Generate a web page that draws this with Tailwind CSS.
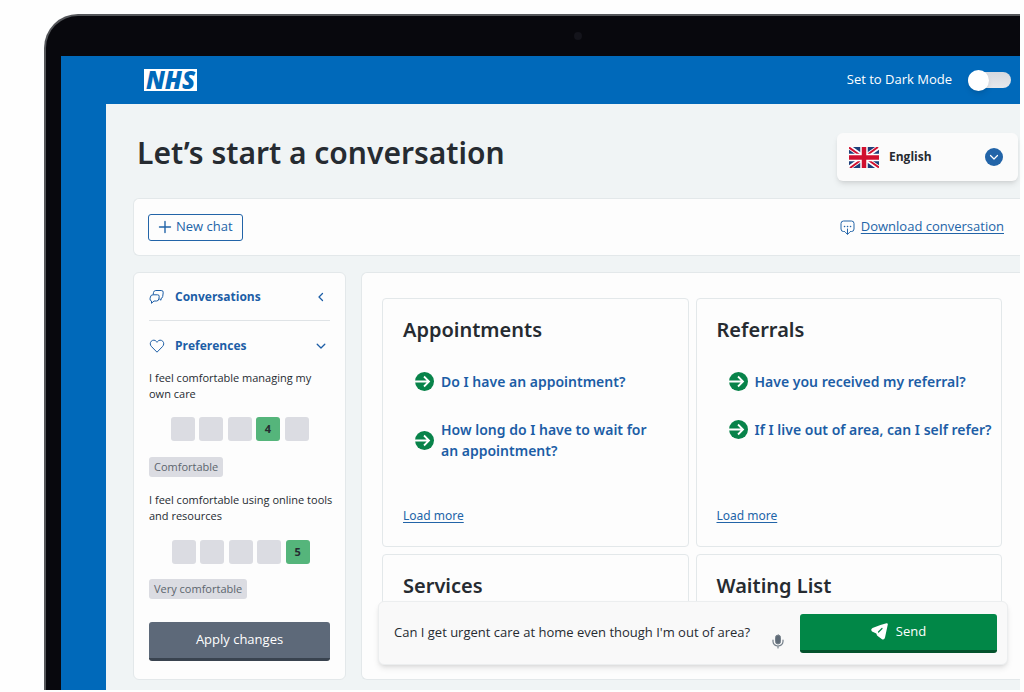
<!DOCTYPE html>
<html lang="en">
  <head>
    <meta charset="UTF-8" />
    <meta name="viewport" content="width=device-width, initial-scale=1.0" />
    <title>Let's start a conversation - NHS</title>
    <script src="https://cdn.jsdelivr.net/npm/@tailwindcss/browser@4"></script>
  </head>
  <body class="bg-[#fefefe] font-['Open_Sans','Noto_Sans',sans-serif] text-[#262b31]">
    <!-- Laptop frame -->
    <div class="mt-[14px] mr-1 ml-11 rounded-tl-[34px] border-t-2 border-l-2 border-[#54565a] bg-[#08080d] pl-[15px]">
      <div class="flex h-10 items-center justify-center pl-[74px]">
        <span class="size-2 rounded-full bg-[#14141b]"></span>
      </div>

      <!-- Screen -->
      <div class="bg-[#0069ba]">
        <header class="flex h-12 items-center justify-between pr-[9px] pl-[83px]">
          <a href="#" class="flex h-[22px] w-[53px] items-center justify-center bg-white text-2xl leading-none font-extrabold text-[#0069ba] italic">NHS</a>
          <label class="flex items-center gap-4 text-[13px] text-white">
            Set to Dark Mode
            <input
              type="checkbox"
              role="switch"
              class="flex h-4 w-[43px] appearance-none items-center rounded-full bg-linear-to-b from-[#d5d8df] to-[#e6e8ec] before:size-[21px] before:shrink-0 before:rounded-full before:bg-white before:shadow-md"
            />
          </label>
        </header>

        <main class="ml-[45px] bg-[#f0f4f5] pb-[10px] pl-[27px]">
          <div class="flex h-[94px] items-center justify-between pl-1">
            <h1 class="pt-1 font-['Noto_Sans',sans-serif] text-3xl leading-10 font-semibold">Let’s start a conversation</h1>
            <div class="mt-3 mr-[2px] flex h-12 w-[181px] items-center rounded-md bg-[#fbfbfb] px-3 shadow-md">
              <svg class="h-[21px] w-[30px] shrink-0" viewBox="0 0 60 42" aria-hidden="true">
                <path fill="#1d3f7a" d="M0 0h60v42H0z" />
                <path stroke="#fff" stroke-width="9" d="m0 0 60 42M60 0 0 42" />
                <path stroke="#d0102f" stroke-width="4" d="m0 1 27 19M60 41 33 22M58 0 32 19M2 42l26-19" />
                <path stroke="#fff" stroke-width="15" d="M30 0v42M0 21h60" />
                <path stroke="#d0102f" stroke-width="9" d="M30 0v42M0 21h60" />
              </svg>
              <select aria-label="Language" class="min-w-0 flex-1 appearance-none bg-transparent pl-[10px] text-xs font-bold">
                <option>English</option>
              </select>
              <svg class="mr-[3px] size-[18px] shrink-0" viewBox="0 0 18 18" fill="none" aria-hidden="true">
                <circle cx="9" cy="9" r="9" fill="#2264a8" />
                <path d="m5.5 7.5 3.5 3.5 3.5-3.5" stroke="#fff" stroke-width="1.2" stroke-linecap="round" stroke-linejoin="round" />
              </svg>
            </div>
          </div>

          <div class="flex h-[58px] items-center justify-between rounded-l-md border border-r-0 border-[#e3e8ea] bg-[#fdfdfd] pr-4 pl-[14px]">
            <button class="flex h-[27px] items-center gap-1 rounded-[3px] border border-[#2264a8] px-[9px] text-[13px] text-[#2264a8]">
              <svg class="size-[14px]" viewBox="0 0 14 14" fill="none" stroke="currentColor" stroke-width="1.4" stroke-linecap="round" aria-hidden="true">
                <path d="M7 1.5v11M1.5 7h11" />
              </svg>
              New chat
            </button>
            <a href="#" class="flex items-center gap-[6px] text-[13px] text-[#2264a8]">
              <svg class="size-[15px]" viewBox="0 0 15 15" fill="none" stroke="currentColor" stroke-linecap="round" stroke-linejoin="round" aria-hidden="true">
                <path d="M4.5 11.5h-1A2.5 2.5 0 0 1 1 9V3.5A2.5 2.5 0 0 1 3.5 1h8A2.5 2.5 0 0 1 14 3.5V9a2.5 2.5 0 0 1-2.5 2.5h-1" />
                <path d="M7.5 9v5M5.5 12.5l2 1.8 2-1.8" />
                <path d="M4.5 6.5h.1M7.5 6.5h.1M10.5 6.5h.1" stroke-width="1.5" />
              </svg>
              <span class="underline underline-offset-2">Download conversation</span>
            </a>
          </div>

          <div class="mt-4 flex gap-[15px]">
            <!-- Sidebar -->
            <aside class="w-[213px] shrink-0 rounded-md border border-[#e3e8ea] bg-[#fdfdfd] px-[15px] pb-[18px]">
              <button class="flex h-12 w-full items-center border-b border-[#dfe3e6] text-xs font-bold text-[#1c5da6]">
                <svg class="mr-[10px] size-4" viewBox="0 0 16 16" fill="none" stroke="currentColor" stroke-linejoin="round" aria-hidden="true">
                  <path d="M4.2 5.5 4.5 3.5A2.4 2.4 0 0 1 6.8 1.5h5.4a2 2 0 0 1 2 2.3l-.5 3.7a2.4 2.4 0 0 1-1.7 2v1.7l-1.8-1.4" />
                  <path d="M4 5.8h4.5a1.7 1.7 0 0 1 1.7 2l-.4 2A2.3 2.3 0 0 1 7.6 12H5l-2.5 2.3V12A2 2 0 0 1 1 9.8l.4-1.8A2.6 2.6 0 0 1 4 5.8Z" />
                </svg>
                Conversations
                <svg class="mr-1 ml-auto size-[10px]" viewBox="0 0 10 10" fill="none" stroke="currentColor" stroke-width="1.3" stroke-linecap="round" stroke-linejoin="round" aria-hidden="true">
                  <path d="M6.5 1.5 3 5l3.5 3.5" />
                </svg>
              </button>
              <button class="flex h-[49px] w-full items-center text-xs font-bold text-[#1c5da6]">
                <svg class="mr-[10px] size-4" viewBox="0 0 16 16" fill="none" stroke="currentColor" stroke-linejoin="round" aria-hidden="true">
                  <path d="M8 14.2 2.6 8.7C.9 7 .9 4.7 2.2 3.3c1.5-1.6 4-1.5 5.2.2L8 4.3l.6-.8c1.2-1.7 3.7-1.8 5.2-.2 1.3 1.4 1.3 3.7-.4 5.4Z" />
                </svg>
                Preferences
                <svg class="mr-1 ml-auto size-[10px]" viewBox="0 0 10 10" fill="none" stroke="currentColor" stroke-width="1.3" stroke-linecap="round" stroke-linejoin="round" aria-hidden="true">
                  <path d="M1.2 3.2 5 7l3.8-3.8" />
                </svg>
              </button>

              <fieldset>
                <legend class="text-[11px] leading-4 whitespace-nowrap">I feel comfortable managing my<br />own care</legend>
                <div class="mx-auto mt-[15px] flex w-[138px] justify-between">
                  <input type="radio" name="care" aria-label="1" class="size-6 appearance-none rounded-[3px] bg-[#dbdce2]" />
                  <input type="radio" name="care" aria-label="2" class="size-6 appearance-none rounded-[3px] bg-[#dbdce2]" />
                  <input type="radio" name="care" aria-label="3" class="size-6 appearance-none rounded-[3px] bg-[#dbdce2]" />
                  <label class="grid place-items-center text-[11px] font-bold">
                    <input type="radio" name="care" checked class="col-start-1 row-start-1 size-6 appearance-none rounded-[3px] bg-[#55b57b]" />
                    <span class="col-start-1 row-start-1">4</span>
                  </label>
                  <input type="radio" name="care" aria-label="5" class="size-6 appearance-none rounded-[3px] bg-[#dbdce2]" />
                </div>
                <p class="mt-4 w-fit rounded-[3px] bg-[#dbdce2] px-[5px] text-[11px] leading-5 text-[#5b656d]">Comfortable</p>
              </fieldset>

              <fieldset class="mt-[15px]">
                <legend class="text-[11px] leading-4 whitespace-nowrap">I feel comfortable using online tools<br />and resources</legend>
                <div class="mx-auto mt-4 flex w-[138px] justify-between">
                  <input type="radio" name="tools" aria-label="1" class="size-6 appearance-none rounded-[3px] bg-[#dbdce2]" />
                  <input type="radio" name="tools" aria-label="2" class="size-6 appearance-none rounded-[3px] bg-[#dbdce2]" />
                  <input type="radio" name="tools" aria-label="3" class="size-6 appearance-none rounded-[3px] bg-[#dbdce2]" />
                  <input type="radio" name="tools" aria-label="4" class="size-6 appearance-none rounded-[3px] bg-[#dbdce2]" />
                  <label class="grid place-items-center text-[11px] font-bold">
                    <input type="radio" name="tools" checked class="col-start-1 row-start-1 size-6 appearance-none rounded-[3px] bg-[#55b57b]" />
                    <span class="col-start-1 row-start-1">5</span>
                  </label>
                </div>
                <p class="mt-[15px] w-fit rounded-[3px] bg-[#dbdce2] px-[5px] text-[11px] leading-5 text-[#5b656d]">Very comfortable</p>
              </fieldset>

              <button class="mt-[23px] h-[39px] w-full rounded-[3px] border-b-[3px] border-[#39434f] bg-[#5d6979] text-[13px] text-white">Apply changes</button>
            </aside>

            <!-- Topics -->
            <section class="relative min-w-0 flex-1 rounded-l-md border border-r-0 border-[#e3e8ea] bg-[#fdfdfd] pt-[25px] pr-[18px] pl-5">
              <div class="grid grid-cols-2 gap-[7px] font-['Noto_Sans',sans-serif]">
                <article class="flex h-[249px] flex-col rounded-sm border border-[#e3e8ea] px-5 pt-4 pb-5">
                  <h2 class="text-xl leading-[30px] font-semibold">Appointments</h2>
                  <ul class="mt-[26px] mr-3 ml-3 space-y-[27px] text-sm leading-[21px] font-semibold text-[#1c5da6]">
                    <li>
                      <a href="#" class="flex items-center gap-[7px]">
                        <svg class="size-[19px] shrink-0" viewBox="0 0 19 19" fill="none" aria-hidden="true">
                          <circle cx="9.5" cy="9.5" r="9.5" fill="#08834a" />
                          <path d="M0 9.5h14M9 4.5l5 5-5 5" stroke="#fff" stroke-width="1.8" />
                        </svg>
                        Do I have an appointment?
                      </a>
                    </li>
                    <li>
                      <a href="#" class="flex items-center gap-[7px]">
                        <svg class="size-[19px] shrink-0" viewBox="0 0 19 19" fill="none" aria-hidden="true">
                          <circle cx="9.5" cy="9.5" r="9.5" fill="#08834a" />
                          <path d="M0 9.5h14M9 4.5l5 5-5 5" stroke="#fff" stroke-width="1.8" />
                        </svg>
                        How long do I have to wait for an appointment?
                      </a>
                    </li>
                  </ul>
                  <a href="#" class="mt-auto w-fit text-xs leading-5 text-[#2264a8] underline underline-offset-2">Load more</a>
                </article>

                <article class="flex h-[249px] flex-col rounded-sm border border-[#e3e8ea] px-5 pt-4 pb-5">
                  <h2 class="text-xl leading-[30px] font-semibold">Referrals</h2>
                  <ul class="mt-[26px] ml-3 space-y-[27px] text-sm leading-[21px] font-semibold whitespace-nowrap text-[#1c5da6]">
                    <li>
                      <a href="#" class="flex items-center gap-[7px]">
                        <svg class="size-[19px] shrink-0" viewBox="0 0 19 19" fill="none" aria-hidden="true">
                          <circle cx="9.5" cy="9.5" r="9.5" fill="#08834a" />
                          <path d="M0 9.5h14M9 4.5l5 5-5 5" stroke="#fff" stroke-width="1.8" />
                        </svg>
                        Have you received my referral?
                      </a>
                    </li>
                    <li>
                      <a href="#" class="flex items-center gap-[7px]">
                        <svg class="size-[19px] shrink-0" viewBox="0 0 19 19" fill="none" aria-hidden="true">
                          <circle cx="9.5" cy="9.5" r="9.5" fill="#08834a" />
                          <path d="M0 9.5h14M9 4.5l5 5-5 5" stroke="#fff" stroke-width="1.8" />
                        </svg>
                        If I live out of area, can I self refer?
                      </a>
                    </li>
                  </ul>
                  <a href="#" class="mt-auto w-fit text-xs leading-5 text-[#2264a8] underline underline-offset-2">Load more</a>
                </article>

                <article class="h-20 rounded-sm border border-[#e3e8ea] px-5 pt-4">
                  <h2 class="text-xl leading-[30px] font-semibold">Services</h2>
                </article>
                <article class="h-20 rounded-sm border border-[#e3e8ea] px-5 pt-4">
                  <h2 class="text-xl leading-[30px] font-semibold">Waiting List</h2>
                </article>
              </div>

              <!-- Message bar, floats over the topic cards -->
              <form class="absolute right-3 bottom-[14px] left-4 flex h-16 items-center rounded-md border border-[#eceeef] bg-[#f9f9f9] pr-[10px] pl-[15px] shadow-md">
                <input type="text" aria-label="Message" value="Can I get urgent care at home even though I'm out of area?" class="min-w-0 flex-1 bg-transparent text-[13px]" />
                <button type="button" aria-label="Speak" class="mt-4 mr-4 shrink-0">
                  <svg class="h-[15px] w-3" viewBox="0 0 12 15" fill="none" stroke="#76818b" stroke-linecap="round" aria-hidden="true">
                    <rect x="3.5" y="1" width="5" height="9" rx="2.5" fill="#5f6b77" />
                    <path d="M1 6v1.5a5 4.5 0 0 0 10 0V6M6 12v2" stroke-width="1.2" />
                  </svg>
                </button>
                <button type="button" class="flex h-[39px] w-[197px] shrink-0 items-center justify-center gap-2 rounded-[3px] border-b-[3px] border-[#03522c] bg-[#018747] text-[13px] text-white">
                  <svg class="size-[17px]" viewBox="0 0 17 17" aria-hidden="true">
                    <path fill="#fff" d="M15.5.2Q17 0 16.8 1.5L14 14.5Q13.3 17.3 11 16.2L8 14Q5.5 12.5 5.3 10.5L1 8.5Q-.8 6.5 1.5 5Q8 2 15.5.2Z" />
                    <path stroke="#018747" stroke-width="1.2" stroke-linecap="round" d="m7.5 9 3.5-3.5" />
                  </svg>
                  Send
                </button>
              </form>
            </section>
          </div>
        </main>
      </div>
    </div>
  </body>
</html>
